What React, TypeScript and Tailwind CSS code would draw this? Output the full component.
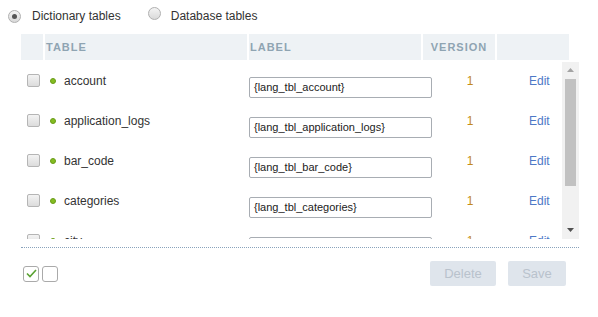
import React from "react";

const rows = [
  { name: "account", label: "{lang_tbl_account}" },
  { name: "application_logs", label: "{lang_tbl_application_logs}" },
  { name: "bar_code", label: "{lang_tbl_bar_code}" },
  { name: "categories", label: "{lang_tbl_categories}" },
  { name: "city", label: "{lang_tbl_city}" },
];

function Radio({ checked }: { checked?: boolean }) {
  return (
    <span className="relative inline-flex h-[13px] w-[13px] items-center justify-center rounded-full border border-[#b0b0b0] bg-gradient-to-b from-[#f4f4f4] to-[#d9d9d9]">
      {checked && <span className="h-[5px] w-[5px] rounded-full bg-[#555]" />}
    </span>
  );
}

export default function App() {
  return (
    <div className="h-[317px] w-[598px] bg-white text-[#333]" style={{ fontFamily: '"Liberation Sans", Arial, sans-serif' }}>
      <div className="flex h-[32px] items-center pl-[8px] text-[12px]">
        <Radio checked />
        <span className="ml-[11px]">Dictionary tables</span>
        <span className="ml-[27px]">
          <Radio />
        </span>
        <span className="ml-[10px]">Database tables</span>
      </div>

      <div className="ml-[21px] mt-[2px] w-[558px]">
        <div className="flex h-[26px] w-[548px] gap-[2px] text-[11px] font-bold tracking-[1px] text-[#8fa4b2]">
          <div className="w-[22px] bg-[#eef2f5]" />
          <div className="flex w-[202px] items-center bg-[#eef2f5] pl-[1px]">TABLE</div>
          <div className="flex w-[172px] items-center bg-[#eef2f5] pl-[1px]">LABEL</div>
          <div className="flex w-[72px] items-center justify-center bg-[#eef2f5]">VERSION</div>
          <div className="w-[72px] bg-[#eef2f5]" />
        </div>

        <div className="flex h-[179px] overflow-hidden">
          <div className="w-[541px]">
            {rows.map((r) => (
              <div key={r.name} className="flex h-[40px] shrink-0 items-center pt-[1px] text-[12px]">
                <div className="w-[24px] pl-[6px]">
                  <span className="block h-[13px] w-[13px] rounded-[2px] border border-[#b5b5b5] bg-gradient-to-b from-[#f3f3f3] to-[#dcdcdc]" />
                </div>
                <div className="flex w-[204px] items-center pl-[5px]">
                  <span className="h-[6px] w-[6px] rounded-full border border-[#6a9c18] bg-[#84bd22]" />
                  <span className="ml-[8px]">{r.name}</span>
                </div>
                <div className="w-[183px] self-start pt-[16px]">
                  <div className="flex h-[21px] items-center rounded-[2px] border border-[#a8adb3] pl-[4px] text-[11px] text-[#222]">
                    {r.label}
                  </div>
                </div>
                <div className="w-[76px] text-center text-[#c38a1c]">1</div>
                <div className="pl-[21px] text-[#4d78c6]">Edit</div>
              </div>
            ))}
          </div>
          <div className="mt-[2px] flex w-[17px] flex-col items-center bg-[#f1f1f1]">
            <svg width="7" height="4" viewBox="0 0 7 4" className="mt-[6px]">
              <path d="M0 4 L3.5 0 L7 4 Z" fill="#a3a3a3" />
            </svg>
            <div className="mt-[7px] h-[107px] w-[11px] bg-[#c1c1c1]" />
            <svg width="7" height="4" viewBox="0 0 7 4" className="mt-auto mb-[7px]">
              <path d="M0 0 L7 0 L3.5 4 Z" fill="#505050" />
            </svg>
          </div>
        </div>

        <div className="mt-[8px] w-[558px] border-t border-dotted border-[#8aa3bc]" />

        <div className="mt-[13px] flex w-[558px] items-center">
          <div className="ml-[2px] flex gap-[3px]">
            <span className="flex h-[16px] w-[16px] items-center justify-center rounded-[3px] border border-[#aaa] bg-white">
              <svg width="11" height="9" viewBox="0 0 11 9">
                <path d="M1 4.5 L4 7.5 L10 1" fill="none" stroke="#5aa232" strokeWidth="1.6" />
              </svg>
            </span>
            <span className="h-[16px] w-[16px] rounded-[3px] border border-[#aaa] bg-white" />
          </div>
          <div className="ml-auto mr-[13px] flex gap-[12px] text-[13px] text-[#b9c2cc]">
            <div className="flex h-[25px] w-[66px] items-center justify-center rounded-[2px] bg-[#dfe5ec]">Delete</div>
            <div className="flex h-[25px] w-[58px] items-center justify-center rounded-[2px] bg-[#dfe5ec]">Save</div>
          </div>
        </div>
      </div>
    </div>
  );
}
